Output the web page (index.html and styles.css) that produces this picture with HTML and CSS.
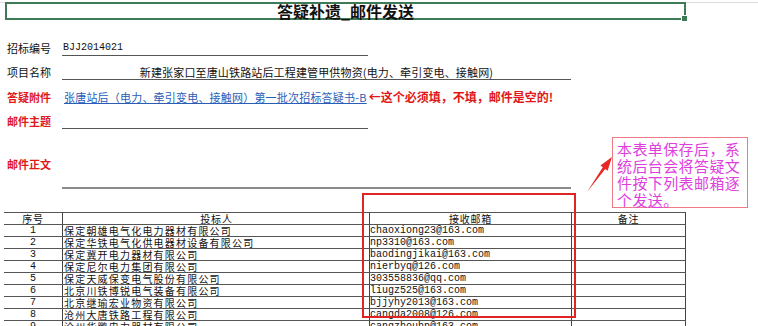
FILE: index.html
```html
<!DOCTYPE html>
<html lang="zh-CN">
<head>
<meta charset="utf-8">
<title>答疑补遗_邮件发送</title>
<link rel="stylesheet" href="styles.css">
</head>
<body>
<div class="sheet">
  <div class="titlebar">
    <div class="titlebox">答疑补遗_邮件发送<span class="handle"></span></div>
  </div>

  <div class="form">
    <div class="row r1">
      <div class="label">招标编号</div>
      <div class="field short mono">BJJ2014021</div>
    </div>
    <div class="row r2">
      <div class="label">项目名称</div>
      <div class="field long center">新建张家口至唐山铁路站后工程建管甲供物资(电力、牵引变电、接触网)</div>
    </div>
    <div class="row r3">
      <div class="label red">答疑附件</div>
      <a class="link" href="#">张唐站后（电力、牵引变电、接触网）第一批次招标答疑书-B</a>
      <span class="note">←这个必须填，不填，邮件是空的!</span>
    </div>
    <div class="row r4">
      <div class="label red">邮件主题</div>
      <div class="field short"></div>
    </div>
    <div class="row r5">
      <div class="label red top">邮件正文</div>
      <div class="field long body"></div>
    </div>
  </div>

  <div class="grid">
    <div class="c c1 h">序号</div><div class="c c2 h">投标人</div><div class="c c3 h">接收邮箱</div><div class="c c4 h">备注</div>
    <div class="c c1 n">1</div><div class="c c2">保定朝雄电气化电力器材有限公司</div><div class="c c3 mail">chaoxiong23@163.com</div><div class="c c4"></div>
    <div class="c c1 n">2</div><div class="c c2">保定华铁电气化供电器材设备有限公司</div><div class="c c3 mail">np3310@163.com</div><div class="c c4"></div>
    <div class="c c1 n">3</div><div class="c c2">保定冀开电力器材有限公司</div><div class="c c3 mail">baodingjikai@163.com</div><div class="c c4"></div>
    <div class="c c1 n">4</div><div class="c c2">保定尼尔电力集团有限公司</div><div class="c c3 mail">nierbyq@126.com</div><div class="c c4"></div>
    <div class="c c1 n">5</div><div class="c c2">保定天威保变电气股份有限公司</div><div class="c c3 mail">303558836@qq.com</div><div class="c c4"></div>
    <div class="c c1 n">6</div><div class="c c2">北京川铁博锐电气装备有限公司</div><div class="c c3 mail">liugz525@163.com</div><div class="c c4"></div>
    <div class="c c1 n">7</div><div class="c c2">北京继瑜宏业物资有限公司</div><div class="c c3 mail">bjjyhy2013@163.com</div><div class="c c4"></div>
    <div class="c c1 n">8</div><div class="c c2">沧州大唐铁路工程有限公司</div><div class="c c3 mail">cangda2008@126.com</div><div class="c c4"></div>
    <div class="c c1 n">9</div><div class="c c2">沧州华鹏电力器材有限公司</div><div class="c c3 mail">cangzhouhp@163.com</div><div class="c c4"></div>
  </div>

  <div class="redbox"></div>
  <svg class="arrow" width="40" height="50" viewBox="0 0 40 50">
    <polygon points="7,42 25.2,19.1 27.6,20.8 32,7 20.4,15.6 22.8,17.3" fill="#e82626"/>
  </svg>
  <div class="callout">本表单保存后，系<br>统后台会将答疑文<br>件按下列表邮箱逐<br>个发送。</div>
</div>
</body>
</html>
```
FILE: styles.css
```css
html, body {
  margin: 0;
  padding: 0;
  overflow: hidden;
  background: #fff;
}
body {
  font-family: "Noto Sans CJK SC", "Liberation Sans", sans-serif;
  color: #111;
}
.sheet {
  position: relative;
  width: 758px;
  height: 326px;
  padding-top: 2px;
  box-sizing: border-box;
  overflow: hidden;
}
.titlebar {
  border-top: 1px solid #dcdcdc;
}
.titlebox {
  position: relative;
  margin-left: 5px;
  width: 681px;
  height: 18px;
  box-sizing: border-box;
  margin-top: -1px;
  border: 2px solid #3d7a55;
  text-align: center;
  font-size: 16px;
  font-weight: bold;
  line-height: 14px;
  color: #111;
}
.handle {
  position: absolute;
  right: -4px;
  bottom: -4px;
  width: 5px;
  height: 5px;
  background: #3d7a55;
  border: 1px solid #fff;
}
.form {
  margin-top: 21px;
  padding-left: 7px;
}
.row {
  display: flex;
  align-items: flex-end;
  height: 15px;
}
.label {
  width: 55px;
  flex: none;
  font-size: 11px;
  line-height: 14px;
  height: 14px;
  align-self: flex-start;
}
.red {
  color: #e01818;
  font-weight: bold;
}
.field {
  height: 15px;
  box-sizing: border-box;
  border-bottom: 1px solid #555;
  font-size: 11px;
  line-height: 14px;
}
.field.short { width: 306px; }
.field.long { width: 509px; }
.center {
  text-align: center;
  letter-spacing: 0.15px;
}
.mono {
  font-family: "Liberation Mono", "DejaVu Sans Mono", monospace;
  font-size: 10px;
}
.r1 .mono { padding-left: 1px; }
.r2 { margin-top: 9px; }
.r3 { margin-top: 10px; align-items: flex-start; }
.link {
  margin-left: 2px;
  font-size: 11px;
  letter-spacing: 0.2px;
  line-height: 14px;
  color: #2a5db8;
  text-decoration: underline;
  white-space: nowrap;
}
.note {
  margin-left: 2px;
  font-size: 12px;
  line-height: 14px;
  font-weight: bold;
  color: #e01818;
  white-space: nowrap;
}
.r4 { margin-top: 9px; }
.r5 { margin-top: 28px; height: 32px; }
.field.body {
  height: 32px;
  border-bottom: 2px solid #8a8a8a;
}
.grid {
  margin-top: 23px;
  margin-left: 4px;
  display: grid;
  grid-template-columns: 58px 307px 202px 115px;
  width: 682px;
}
.c {
  height: 12px;
  box-sizing: border-box;
  border-bottom: 1px solid #555;
  font-size: 10px;
  letter-spacing: 1.2px;
  line-height: 11px;
  white-space: nowrap;
}
.c.h {
  height: 13px;
  border-top: 1px solid #555;
  text-align: center;
  letter-spacing: 0.8px;
}
.c2, .c3, .c4 { border-left: 1px solid #444; }
.c4 { border-right: 1px solid #444; }
.c2 { padding-left: 1px; }
.c.mail {
  font-family: "Liberation Mono", "DejaVu Sans Mono", monospace;
  font-size: 10px;
  letter-spacing: 0;
  line-height: 12px;
}
.c1.n {
  text-align: center;
  font-family: "Liberation Mono", monospace;
  font-size: 10px;
  letter-spacing: 0;
}
.redbox {
  position: absolute;
  left: 362px;
  top: 193px;
  width: 214px;
  height: 125px;
  box-sizing: border-box;
  border: 2px solid #e02424;
}
.arrow {
  position: absolute;
  left: 580px;
  top: 150px;
}
.callout {
  position: absolute;
  left: 612px;
  top: 137px;
  width: 136px;
  height: 71px;
  box-sizing: border-box;
  border: 1px solid #ee7a86;
  padding: 2px 0 0 4px;
  font-size: 15px;
  letter-spacing: 0.4px;
  line-height: 17px;
  color: #de3ede;
  background: #fff;
  white-space: nowrap;
}
```
